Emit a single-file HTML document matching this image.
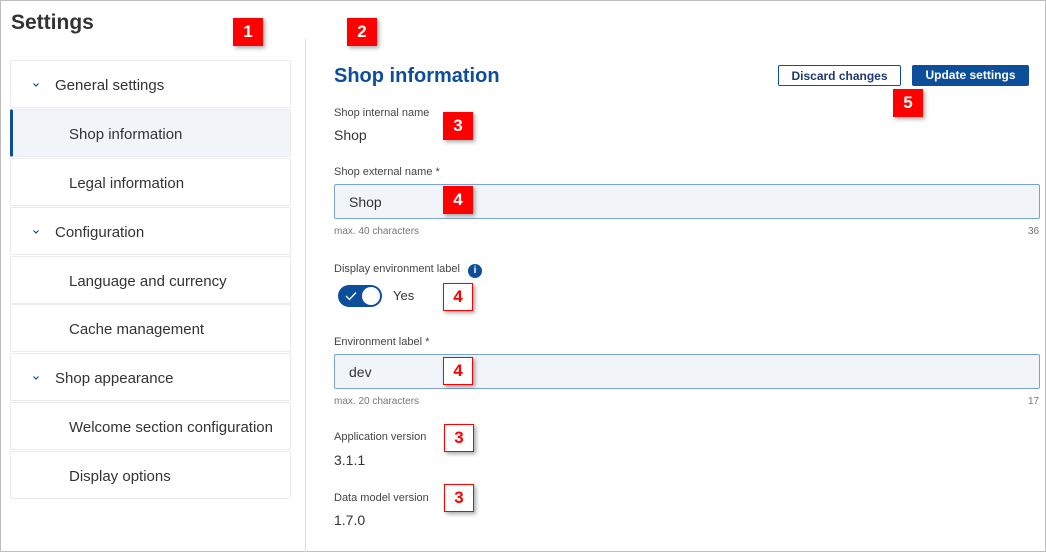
<!DOCTYPE html>
<html><head><style>
*{box-sizing:border-box;margin:0;padding:0}
body{width:1046px;height:552px;position:relative;background:#fff;font-family:"Liberation Sans",Arial,sans-serif;color:#333;overflow:hidden}
.frame{position:absolute;left:0;top:0;width:1046px;height:552px;border:1px solid #bdbdbd}
.abs{position:absolute}
.item{position:absolute;left:10px;width:281px;height:48px;border:1px solid #ebebeb;border-radius:2px;font-size:15px;color:#333;line-height:50px}
.sel{background:#f1f4f8;border-left:3px solid #0d4e9a}
.b{position:absolute;width:30px;height:28px;font-weight:bold;font-size:17px;text-align:center;line-height:28px;box-shadow:2px 2px 4px rgba(0,0,0,.35)}
.f{background:#ff0000;color:#fff}
.o{background:#fff;color:#f00;border:1px solid #f00;line-height:26px}
.lbl{position:absolute;left:334px;font-size:11px;color:#444}
.val{position:absolute;left:334px;font-size:14px;color:#333}
.inp{position:absolute;left:334px;width:706px;height:35px;background:#f1f4f8;border:1px solid #7aa3d1;border-radius:2px;font-size:14px;padding-left:14px;line-height:34px}
.hint{position:absolute;font-size:10px;color:#777}
.chev{position:absolute;left:21px;top:21px}
</style></head><body>
<div class="frame"></div>
<div class="abs" style="left:11px;top:11px;font-size:21px;font-weight:bold;color:#333">Settings</div>
<div class="abs" style="left:305px;top:39px;width:1px;height:513px;background:#ddd"></div>

<div class="item" style="top:60px;padding-left:44px"><svg class="chev" width="8" height="6"><path d="M1.5 1.5 L4 4 L6.5 1.5" stroke="#0d4e9a" stroke-width="1.2" fill="none"/></svg>General settings</div>
<div class="item sel" style="top:109px;padding-left:56px">Shop information</div>
<div class="item" style="top:158px;padding-left:58px">Legal information</div>
<div class="item" style="top:207px;padding-left:44px"><svg class="chev" width="8" height="6"><path d="M1.5 1.5 L4 4 L6.5 1.5" stroke="#0d4e9a" stroke-width="1.2" fill="none"/></svg>Configuration</div>
<div class="item" style="top:256px;padding-left:58px">Language and currency</div>
<div class="item" style="top:304px;padding-left:58px">Cache management</div>
<div class="item" style="top:353px;padding-left:44px"><svg class="chev" width="8" height="6"><path d="M1.5 1.5 L4 4 L6.5 1.5" stroke="#0d4e9a" stroke-width="1.2" fill="none"/></svg>Shop appearance</div>
<div class="item" style="top:402px;padding-left:58px">Welcome section configuration</div>
<div class="item" style="top:451px;padding-left:58px">Display options</div>

<div class="abs" style="left:334px;top:65px;font-size:20px;font-weight:bold;color:#0d4e9a">Shop information</div>
<div class="abs" style="left:778px;top:65px;width:123px;height:21px;border:1px solid #0d4e9a;border-radius:2px;font-size:12px;font-weight:bold;color:#1a3a6e;text-align:center;line-height:20px">Discard changes</div>
<div class="abs" style="left:912px;top:65px;width:117px;height:21px;background:#0d4e9a;border-radius:2px;font-size:12px;font-weight:bold;color:#fff;text-align:center;line-height:21px">Update settings</div>

<div class="lbl" style="top:107px">Shop internal name</div>
<div class="val" style="top:127px">Shop</div>
<div class="lbl" style="top:166px">Shop external name *</div>
<div class="inp" style="top:184px">Shop</div>
<div class="hint" style="left:334px;top:226px">max. 40 characters</div>
<div class="hint" style="left:1028px;top:226px">36</div>
<div class="lbl" style="top:263px">Display environment label</div>
<div class="abs" style="left:468px;top:264px;width:14px;height:14px;border-radius:50%;background:#0d4e9a;color:#fff;font-size:10px;font-weight:bold;text-align:center;line-height:14px">i</div>
<div class="abs" style="left:338px;top:285px;width:44px;height:22px;border-radius:11px;background:#0d4e9a"></div>
<div class="abs" style="left:362px;top:287px;width:18px;height:18px;border-radius:50%;background:#fff"></div>
<svg class="abs" style="left:344px;top:290px" width="14" height="12"><path d="M2 6 L5.5 9.5 L12 2.5" stroke="#fff" stroke-width="1.3" fill="none"/></svg>
<div class="abs" style="left:393px;top:288px;font-size:13px">Yes</div>
<div class="lbl" style="top:336px">Environment label *</div>
<div class="inp" style="top:354px">dev</div>
<div class="hint" style="left:334px;top:396px">max. 20 characters</div>
<div class="hint" style="left:1028px;top:396px">17</div>
<div class="lbl" style="top:431px">Application version</div>
<div class="val" style="top:452px">3.1.1</div>
<div class="lbl" style="top:492px">Data model version</div>
<div class="val" style="top:512px">1.7.0</div>

<div class="b f" style="left:233px;top:18px">1</div>
<div class="b f" style="left:347px;top:18px">2</div>
<div class="b f" style="left:443px;top:112px">3</div>
<div class="b f" style="left:443px;top:186px">4</div>
<div class="b o" style="left:443px;top:283px">4</div>
<div class="b o" style="left:443px;top:357px">4</div>
<div class="b o" style="left:444px;top:424px">3</div>
<div class="b o" style="left:444px;top:484px">3</div>
<div class="b f" style="left:893px;top:89px">5</div>
</body></html>
